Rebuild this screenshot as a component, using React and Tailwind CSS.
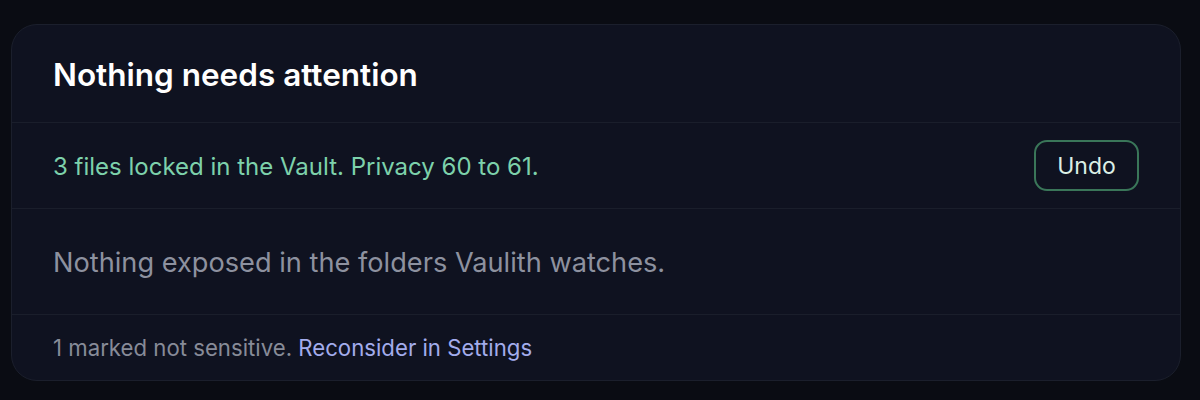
import React from "react";

const font = { fontFamily: "Inter, 'Noto Sans', sans-serif" };

export default function App() {
    return (
        <div className="min-h-[400px] w-[1200px] bg-[#0a0c13] pt-[24px] pl-[11px]" style={font}>
            <section className="w-[1170px] overflow-hidden rounded-[26px] border border-[#1b1f2c] bg-[#0f1220]">
                <header className="flex h-[98px] items-center border-b border-[#1a1e2b] px-[41px]">
                    <h2 className="pt-[2px] text-[31.5px] font-semibold text-white">Nothing needs attention</h2>
                </header>

                <div className="flex h-[86px] items-center justify-between border-b border-[#1a1e2b] pl-[41px] pr-[41px]">
                    <p className="pt-[3px] text-[24px] text-[#7dd1ab]">3 files locked in the Vault. Privacy 60 to 61.</p>
                    <button className="h-[51px] w-[105px] rounded-[13px] border-2 border-[#3a7659] pt-[2px] text-[23px] text-[#dcefe6]">
                        Undo
                    </button>
                </div>

                <div className="flex h-[106px] items-center border-b border-[#1a1e2b] px-[41px]">
                    <p className="pt-[3px] text-[27.2px] text-[#8d919f]">Nothing exposed in the folders Vaulith watches.</p>
                </div>

                <footer className="flex h-[65px] items-center px-[41px] text-[22.2px]">
                    <span className="text-[#878b98]">1 marked not sensitive.&nbsp;</span>
                    <a className="text-[#a3acec]">Reconsider in Settings</a>
                </footer>
            </section>
        </div>
    );
}
